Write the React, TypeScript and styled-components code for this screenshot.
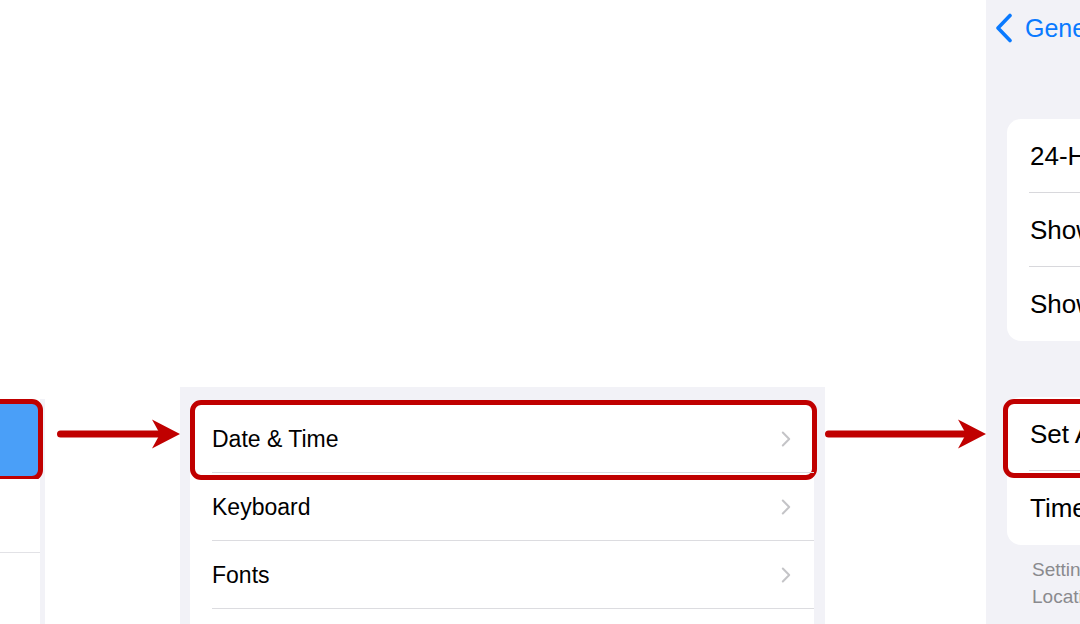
import styled, { createGlobalStyle } from "styled-components";

const GlobalStyle = createGlobalStyle`
  html, body {
    margin: 0;
    padding: 0;
    background: #fff;
  }
  body {
    font-family: "Liberation Sans", Arial, sans-serif;
    -webkit-font-smoothing: antialiased;
  }
`;

const Stage = styled.div`
  display: flex;
  align-items: flex-start;
  width: 1080px;
  height: 624px;
  overflow: hidden;
  background: #fff;
`;

// red callout drawn over the highlighted row
const Ring = styled.span<{ $top: number; $right: number; $bottom: number; $left: number }>`
  position: absolute;
  top: ${(p) => p.$top}px;
  right: ${(p) => p.$right}px;
  bottom: ${(p) => p.$bottom}px;
  left: ${(p) => p.$left}px;
  border: 5px solid #c00000;
  border-radius: 11px;
  box-sizing: border-box;
  pointer-events: none;
`;

/* ---- sidebar crop ---- */

const SidebarCrop = styled.div`
  flex: 0 0 45px;
  height: 225px;
  margin-top: 399px;
  padding-right: 5px;
  box-sizing: border-box;
  background: #f2f2f7;
`;

const SidebarList = styled.div`
  height: 100%;
  padding-top: 2px;
  box-sizing: border-box;
  background: #fff;
`;

const SidebarItem = styled.div<{ $selected?: boolean }>`
  position: relative;
  height: ${(p) => (p.$selected ? 78 : 73)}px;
  background: ${(p) => (p.$selected ? "#4a9ff8" : "#fff")};
  border-radius: ${(p) => (p.$selected ? "0 5px 5px 0" : "0")};
  border-bottom: ${(p) => (p.$selected ? "none" : "1px solid #e2e2e6")};
`;

/* ---- arrows ---- */

const ArrowWrap = styled.div<{ $width: number; $offset: number }>`
  flex: 0 0 ${(p) => p.$width}px;
  margin-top: 419px;
  margin-left: ${(p) => p.$offset}px;
  height: 30px;
  svg {
    display: block;
  }
`;

function Arrow({ width, offset = 0 }: { width: number; offset?: number }) {
  const w = width;
  return (
    <ArrowWrap $width={w} $offset={offset}>
      <svg width={w} height={30} viewBox={`0 0 ${w} 30`}>
        <line x1={3.5} y1={15} x2={w - 20} y2={15} stroke="#c00000" strokeWidth={7} strokeLinecap="round" />
        <polygon points={`${w - 28},0.5 ${w},15 ${w - 28},29.5 ${w - 20},15`} fill="#c00000" />
      </svg>
    </ArrowWrap>
  );
}

/* ---- general settings crop ---- */

const SettingsCrop = styled.div`
  flex: 0 0 645px;
  height: 237px;
  margin-top: 387px;
  padding: 18px 11px 0 10px;
  box-sizing: border-box;
  background: #f2f2f7;
`;

const SettingsCard = styled.div`
  background: #fff;
`;

const SettingsRow = styled.div`
  position: relative;
  display: flex;
  align-items: center;
  justify-content: space-between;
  height: 68px;
  padding: 0 23px 0 22px;
  font-size: 23px;
  color: #000;
  &::after {
    content: "";
    position: absolute;
    left: 22px;
    right: 0;
    bottom: 0;
    height: 1px;
    background: #dcdce0;
  }
`;

const Chevron = () => (
  <svg width="10" height="16" viewBox="0 0 10 16">
    <path d="M1.8 1.5 L8.2 8 L1.8 14.5" fill="none" stroke="#c4c4c7" strokeWidth="2" strokeLinecap="round" strokeLinejoin="round" />
  </svg>
);

/* ---- date & time crop ---- */

const DetailCrop = styled.div`
  flex: 0 0 420px;
  height: 624px;
  background: #f2f2f7;
`;

const NavBar = styled.div`
  display: flex;
  align-items: center;
  gap: 12px;
  height: 56px;
  padding-left: 9px;
  color: #0a7aff;
  font-size: 25px;
  white-space: nowrap;
`;

const DetailCard = styled.div<{ $gap: number }>`
  margin: ${(p) => p.$gap}px 0 0 21px;
  background: #fff;
  border-radius: 14px;
`;

const DetailRow = styled.div`
  position: relative;
  display: flex;
  align-items: center;
  height: 74px;
  padding-left: 23px;
  font-size: 26px;
  color: #000;
  white-space: nowrap;
  &:not(:last-child)::after {
    content: "";
    position: absolute;
    left: 22px;
    right: 0;
    bottom: 0;
    height: 1px;
    background: #d8d8dc;
  }
`;

const Footnote = styled.p`
  margin: 11px 0 0 46px;
  font-size: 19px;
  line-height: 27px;
  color: #8a8a8e;
  white-space: nowrap;
`;

const BackChevron = () => (
  <svg width="18" height="30" viewBox="0 0 18 30">
    <path d="M15 2.5 L3 15 L15 27.5" fill="none" stroke="#0a7aff" strokeWidth="3.6" strokeLinecap="round" strokeLinejoin="round" />
  </svg>
);

const generalItems = ["Date & Time", "Keyboard", "Fonts", "Language & Region"];

export default function App() {
  return (
    <>
      <GlobalStyle />
      <Stage>
        <SidebarCrop>
          <SidebarList>
            <SidebarItem $selected>
              <Ring $top={-2} $right={-3} $bottom={-2} $left={-12} />
            </SidebarItem>
            <SidebarItem />
          </SidebarList>
        </SidebarCrop>

        <Arrow width={123} offset={12} />

        <SettingsCrop>
          <SettingsCard>
            {generalItems.map((label, i) => (
              <SettingsRow key={label}>
                {label}
                <Chevron />
                {i === 0 && <Ring $top={-5} $right={-3} $bottom={-7} $left={0} />}
              </SettingsRow>
            ))}
          </SettingsCard>
        </SettingsCrop>

        <Arrow width={161} />

        <DetailCrop>
          <NavBar>
            <BackChevron />
            General
          </NavBar>
          <DetailCard $gap={63}>
            <DetailRow>24-Hour Time</DetailRow>
            <DetailRow>Show Day in Status Bar</DetailRow>
            <DetailRow>Show Date in Status Bar</DetailRow>
          </DetailCard>
          <DetailCard $gap={56}>
            <DetailRow>
              Set Automatically
              <Ring $top={2} $right={-10} $bottom={-7} $left={-4} />
            </DetailRow>
            <DetailRow>Time Zone</DetailRow>
          </DetailCard>
          <Footnote>
            Setting the time zone automatically requires
            <br />
            Location Services to be turned on.
          </Footnote>
        </DetailCrop>
      </Stage>
    </>
  );
}
